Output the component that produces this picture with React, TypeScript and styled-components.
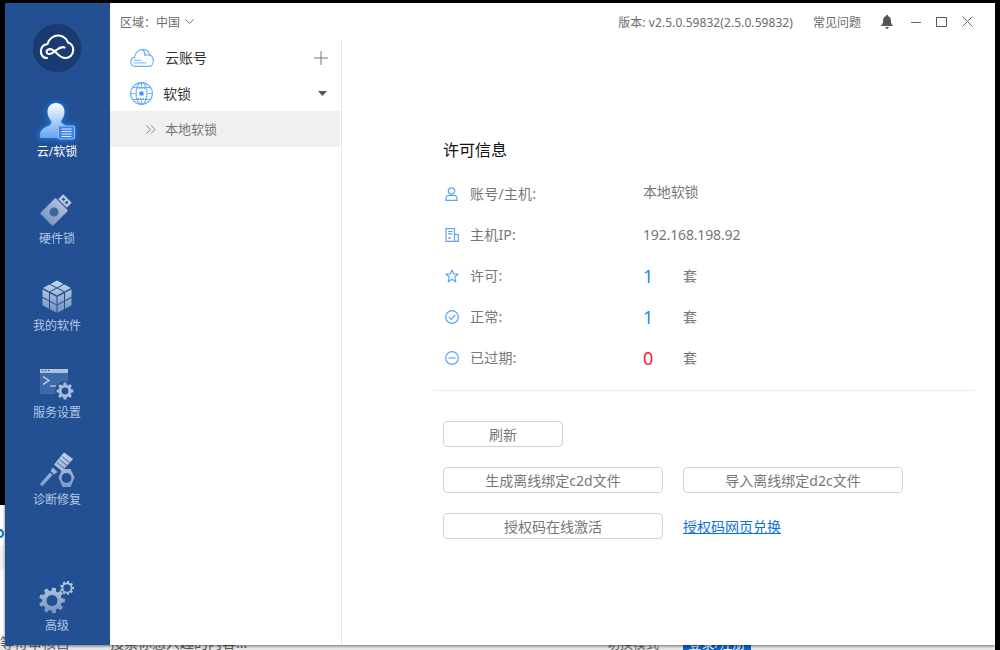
import React from "react";
import styled, { createGlobalStyle } from "styled-components";

const Global = createGlobalStyle`
  html, body { margin: 0; padding: 0; background: #000; }
  body { font-family: "Noto Sans", "Noto Sans CJK SC", sans-serif; }
  * { box-sizing: border-box; }
`;

const Desktop = styled.div`
  position: relative;
  width: 1000px;
  height: 650px;
  overflow: hidden;
  background: #000;
`;

const BackPage = styled.div`
  position: absolute;
  left: 0;
  top: 505px;
  width: 995px;
  height: 145px;
  background: linear-gradient(#fff 0 40px, #f3f3f3 40px 65px, #fff 65px 135px, #e9e9e9 135px);
  overflow: hidden;
`;

const BackRing = styled.span`
  position: absolute;
  left: -4px;
  top: 24px;
  width: 8px;
  height: 9px;
  border: 2px solid #1272c9;
  border-radius: 50%;
`;

const BackRow = styled.div`
  position: absolute;
  left: 0;
  right: 0;
  bottom: -3px;
  height: 20px;
  display: flex;
  align-items: center;
  font-size: 14px;
  line-height: 20px;
  color: #666;
  white-space: nowrap;
`;

const BackTab = styled.span`
  width: 93px;
`;

const BackInput = styled.span`
  width: 502px;
  padding-left: 17px;
  color: #555;
`;

const BackMode = styled.span`
  width: 88px;
  padding-left: 12px;
  font-size: 13px;
`;

const BackLogin = styled.span`
  width: 68px;
  height: 20px;
  background: #0b63d1;
  color: #fff;
  text-align: center;
  font-size: 13px;
`;

const AppWindow = styled.div`
  position: absolute;
  left: 5px;
  top: 3px;
  width: 990px;
  height: 642px;
  display: flex;
  background: #fff;
  box-shadow: 0 1px 3px rgba(0, 0, 0, 0.55);
`;

const Sidebar = styled.nav`
  width: 105px;
  flex: none;
  display: flex;
  flex-direction: column;
  align-items: center;
  padding: 21px 1px 10px 0;
  background: #235093;
`;

const LogoBox = styled.div`
  width: 48px;
  height: 48px;
  margin-bottom: 28px;
`;

const NavItem = styled.div<{ $bottom?: boolean }>`
  width: 100%;
  height: ${(p) => (p.$bottom ? "auto" : "87px")};
  margin-top: ${(p) => (p.$bottom ? "auto" : "0")};
  display: flex;
  flex-direction: column;
  align-items: center;
`;

const NavIcon = styled.div`
  height: 40px;
  display: flex;
  align-items: flex-end;
  justify-content: center;
`;

const NavLabel = styled.div<{ $active?: boolean }>`
  margin-top: 3px;
  font-size: 12px;
  line-height: 18px;
  color: ${(p) => (p.$active ? "#fff" : "#b4c7e6")};
`;

const Main = styled.div`
  flex: 1;
  min-width: 0;
  display: flex;
  flex-direction: column;
`;

const TopBar = styled.header`
  height: 37px;
  flex: none;
  display: flex;
  align-items: center;
  padding: 0 22px 0 10px;
  font-size: 12px;
  color: #6b6b6b;
`;

const Region = styled.div`
  display: flex;
  align-items: center;
  gap: 5px;
  margin-right: auto;
`;

const Version = styled.span`
  margin-right: 20px;
  letter-spacing: 0.07px;
`;

const Help = styled.span`
  margin-right: 19px;
`;

const WindowButtons = styled.div`
  display: flex;
  align-items: center;
  gap: 15px;
  margin-left: 17px;
`;

const Body = styled.div`
  flex: 1;
  min-height: 0;
  display: flex;
`;

const TreePanel = styled.aside`
  width: 232px;
  flex: none;
  border-right: 1px solid #e8e8e8;
`;

const TreeRow = styled.div<{ $gap: number; $height: number }>`
  height: ${(p) => p.$height}px;
  display: flex;
  align-items: center;
  gap: ${(p) => p.$gap}px;
  padding: 0 13px 0 20px;
  font-size: 14px;
  color: #333;
`;

const TreeLabel = styled.span`
  padding-bottom: 2px;
`;

const TreeEnd = styled.span<{ $inset?: number }>`
  margin-left: auto;
  margin-right: ${(p) => p.$inset ?? 0}px;
  display: flex;
`;

const SubRow = styled.div`
  height: 36px;
  width: 230px;
  display: flex;
  align-items: center;
  gap: 9px;
  padding-left: 36px;
  background: #f0f0f0;
  font-size: 13px;
  color: #777;
`;

const Detail = styled.section`
  flex: 1;
  min-width: 0;
  padding: 98px 0 0 101px;
`;

const Title = styled.h2`
  margin: 0 0 11px;
  font-size: 16px;
  font-weight: 400;
  line-height: 24px;
  color: #111;
`;

const InfoRow = styled.div`
  height: 41px;
  display: grid;
  grid-template-columns: 27px 173px 40px auto;
  align-items: center;
  font-size: 14px;
  color: #777;
`;

const InfoIcon = styled.span`
  display: flex;
  padding-left: 2px;
`;

const InfoText = styled.span`
  padding-bottom: 2px;
  letter-spacing: 0.2px;
`;

const Value = styled.span<{ $raised?: boolean }>`
  font-size: 14px;
  color: #777;
  letter-spacing: -0.15px;
  margin-bottom: ${(p) => (p.$raised ? "6px" : "0")};
  white-space: nowrap;
`;

const Count = styled.span<{ $color: string }>`
  font-size: 18px;
  line-height: 24px;
  color: ${(p) => p.$color};
`;

const Divider = styled.hr`
  width: 542px;
  height: 1px;
  margin: 12px 0 30px -10px;
  border: 0;
  background: #ececec;
`;

const ButtonRow = styled.div`
  display: flex;
  align-items: center;
  gap: 20px;
  margin-bottom: 20px;
`;

const ActionButton = styled.button<{ $wide?: boolean }>`
  width: ${(p) => (p.$wide ? "220px" : "120px")};
  height: 26px;
  padding: 0 0 1px;
  background: #fff;
  border: 1px solid #d2d2d2;
  border-radius: 4px;
  font: 14px "Noto Sans", "Noto Sans CJK SC", sans-serif;
  color: #777;
`;

const PageLink = styled.a`
  font-size: 14px;
  color: #0f6fdc;
  text-decoration: underline;
`;

const range = (n: number) => Array.from({ length: n }, (_, i) => i);

function gearPath(cx: number, cy: number, r: number, teeth: number, hole: number) {
  const pts: string[] = [];
  const inner = r * 0.76;
  const step = (Math.PI * 2) / teeth;
  range(teeth).forEach((i) => {
    const a = i * step;
    [
      [inner, a - step * 0.34],
      [r, a - step * 0.2],
      [r, a + step * 0.2],
      [inner, a + step * 0.34],
    ].forEach(([rad, t]) => {
      pts.push(`${(cx + rad * Math.cos(t)).toFixed(2)} ${(cy + rad * Math.sin(t)).toFixed(2)}`);
    });
  });
  return `M${pts.join("L")}Z M${cx - hole} ${cy}a${hole} ${hole} 0 1 0 ${hole * 2} 0a${hole} ${hole} 0 1 0 ${-hole * 2} 0Z`;
}

function Fade({ id, from = "#c4d2e8", to = "#6a8aba", h = 36 }: { id: string; from?: string; to?: string; h?: number }) {
  return (
    <defs>
      <linearGradient id={id} gradientUnits="userSpaceOnUse" x1="0" y1="0" x2="0" y2={h}>
        <stop offset="0" stopColor={from} />
        <stop offset="1" stopColor={to} />
      </linearGradient>
    </defs>
  );
}

const LogoIcon = () => (
  <svg width="48" height="48" viewBox="0 0 48 48">
    <path d="M24 0C33 0 37 3 41 7C45 11 48 15 48 24C48 33 45 37 41 41C37 45 33 48 24 48C15 48 11 45 7 41C3 37 0 33 0 24C0 15 3 11 7 7C11 3 15 0 24 0Z" fill="#1a3b72" />
    <path
      d="M14 34C8.500 34 7.500 28.500 8 26C8.500 22.500 11.500 20.500 14.500 20C16 14.500 21 11 26 11.500C30 12 33.500 14.500 35 18.500C38.500 19.500 40.500 23 40.200 26.500C39.800 31 36.500 34 32.500 34C28 34 25.500 31 23 28.500C20.500 26 17.500 24.500 15.300 25.500C13 26.500 13 29.500 15.500 30C18.500 30.500 21 28 23.500 26C26 24 29 22.500 31.500 23.500"
      fill="none"
      stroke="#fff"
      strokeWidth="2.1"
      strokeLinecap="round"
      strokeLinejoin="round"
    />
  </svg>
);

const UserIcon = () => (
  <svg width="36" height="38" viewBox="0 0 36 38" style={{ filter: "drop-shadow(0 0 3px #1a8cff)", overflow: "visible" }}>
    <Fade id="user" from="#ffffff" to="#5f9df0" h={38} />
    <path d="M17 1C22.500 1 25.500 5 25.500 10C25.500 14 23.500 17 22 19C22 21 23.500 22 26 23L26 26L24 27L24 36L1 36C0 30 3 26.500 8 24.500C11 23.500 12.500 22 12.500 19.500C10.500 17 8.500 14 8.500 10C8.500 5 11.500 1 17 1Z" fill="url(#user)" />
    <rect x="19.500" y="24" width="16" height="13" rx="1" fill="#3f86e6" stroke="#8cc0ff" strokeWidth="1" />
    <path d="M22.500 27h10M22.500 29.500h10M22.500 32h10M22.500 34.500h10" stroke="#dcecff" strokeWidth="1" />
  </svg>
);

const UsbIcon = () => (
  <svg width="36" height="36" viewBox="0 0 36 36" style={{ overflow: "visible" }}>
    <Fade id="usb" from="#c4d1e6" to="#7390bd" />
    <g transform="rotate(45 15 21)" fill="url(#usb)">
      <rect x="6" y="10" width="18" height="22" rx="1" />
      <path d="M9 2h12v7H9Z M11.500 4v2.500h2.500V4Z M16 4v2.500h2.500V4Z" fillRule="evenodd" />
      <circle cx="15" cy="21" r="4.500" fill="#3b659f" />
    </g>
  </svg>
);

const CubeIcon = () => {
  type V = [number, number];
  const quad = (o: V, u: V, v: V, i: number, j: number) => {
    const g = 0.07;
    const p = (a: number, b: number) => `${(o[0] + (i + a) * u[0] + (j + b) * v[0]).toFixed(2)},${(o[1] + (i + a) * u[1] + (j + b) * v[1]).toFixed(2)}`;
    return [p(g, g), p(1 - g, g), p(1 - g, 1 - g), p(g, 1 - g)].join(" ");
  };
  const faces: [V, V, V][] = [
    [[16, 0], [7.5, 4], [-7.5, 4]],
    [[1, 8.5], [7.5, 4], [0, 8.5]],
    [[16, 16.5], [7.5, -4], [0, 8.5]],
  ];
  return (
    <svg width="32" height="34" viewBox="0 0 32 34">
      <Fade id="cube" from="#ccd9ec" to="#6c8cbb" h={34} />
      {faces.flatMap(([o, u, v], f) =>
        [0, 1].flatMap((i) => [0, 1].map((j) => <polygon key={`${f}${i}${j}`} points={quad(o, u, v, i, j)} fill="url(#cube)" />))
      )}
    </svg>
  );
};

const TerminalIcon = () => (
  <svg width="36" height="33" viewBox="0 0 36 33">
    <Fade id="term" from="#bccbe3" to="#7c97c2" h={33} />
    <path d="M1 1h28v25H1Z" fill="url(#term)" opacity="0.95" />
    <path d="M1 5h28v21H1Z" fill="#3f6aa8" />
    <path d="M4 8.500l6 4-6 4M11 18h6" fill="none" stroke="#d5e0f0" strokeWidth="1.200" />
    <path d="M3 2.500h1.500M6 2.500h1.500M9 2.500h1.500" stroke="#2d5796" strokeWidth="1.200" />
    <circle cx="26" cy="23" r="10" fill="#235093" />
    <path d={gearPath(26, 23, 8.5, 8, 3.4)} fill="#a9bcdb" fillRule="evenodd" />
  </svg>
);

const RepairIcon = () => (
  <svg width="36" height="36" viewBox="0 0 36 36">
    <Fade id="rep" from="#c3d2e9" to="#7c9ac8" />
    <g fill="url(#rep)">
      <path d="M25 0.500L34 7L23 19.500L15 12.500Z" />
      <path d="M14 15.500L18.500 20L15 22.500L11.500 19Z" />
      <path d="M11 20.500L13.500 23L4 33.500C2.800 34.800 0.500 32.500 1.500 31.300Z" />
      <path d="M23.500 17L31.500 17L35.500 25.500L31.500 35L23.500 35L19.500 25.500Z M22.500 26a5 5 0 1 0 10 0a5 5 0 1 0 -10 0Z" fillRule="evenodd" />
    </g>
    <path d="M23 4.500L31 11M20.500 7.500L28.500 14M18 10.500L26 17" stroke="#3f6aa8" strokeWidth="1" />
  </svg>
);

const GearsIcon = () => (
  <svg width="36" height="33" viewBox="0 0 36 33">
    <Fade id="gear" from="#c1cfe6" to="#7390bd" h={33} />
    <path d={gearPath(13, 19.5, 13, 9, 5.5)} fill="url(#gear)" fillRule="evenodd" />
    <path d={gearPath(28, 7, 7, 9, 3.7)} fill="url(#gear)" fillRule="evenodd" />
  </svg>
);

const CloudIcon = () => (
  <svg width="24" height="20" viewBox="0 0 25 20" fill="none" stroke="#69aefc" strokeWidth="1.200">
    <path d="M6 18.800C2.500 18.800 0.800 16.500 0.800 14C0.800 11.500 2.500 9.800 4.800 9.300C5 5 8.500 1 13 1C17 1 20 3.500 20.800 7C23 8 24.300 10.500 24.300 13.500C24.300 16.500 22 18.800 19 18.800Z" />
    <path d="M13 1C15 3 16 4.500 15.500 7C17.500 6.500 19.500 6.500 20.800 7" />
    <path d="M4 12.500h8M4 15h13" stroke="#8cc3ff" />
  </svg>
);

const GlobeIcon = () => (
  <svg width="23" height="23" viewBox="0 0 23 23" fill="none" stroke="#69aefc" strokeWidth="1.100">
    <circle cx="11.500" cy="11.500" r="10.900" />
    <ellipse cx="11.500" cy="11.500" rx="5.500" ry="10.900" />
    <path d="M2.500 5.500h18M2.500 17.500h18M0.600 11.500h4M18.400 11.500h4M11.500 0.600v4M11.500 18.400v4" />
    <rect x="6.500" y="6.500" width="10" height="10" fill="#fff" strokeDasharray="1.500 1" />
    <rect x="9.500" y="9.500" width="4" height="4" fill="#3d97fb" stroke="none" />
  </svg>
);

const Plus = () => (
  <svg width="14" height="14" viewBox="0 0 14 14" stroke="#777" strokeWidth="1">
    <path d="M7 0v14M0 7h14" />
  </svg>
);

const Caret = () => (
  <svg width="9" height="5" viewBox="0 0 9 5">
    <path d="M0 0h9L4.500 5Z" fill="#555" />
  </svg>
);

const DoubleChevron = () => (
  <svg width="10" height="9" viewBox="0 0 10 9" fill="none" stroke="#888" strokeWidth="1">
    <path d="M0.500 0.500L4.500 4.500L0.500 8.500M5 0.500L9 4.500L5 8.500" />
  </svg>
);

const ChevronDown = () => (
  <svg width="9" height="5" viewBox="0 0 9 5" fill="none" stroke="#777" strokeWidth="1">
    <path d="M0.300 0.300L4.500 4.500L8.700 0.300" />
  </svg>
);

const Bell = () => (
  <svg width="14" height="14" viewBox="0 0 14 14" fill="#555">
    <path d="M7 0C7.800 0 8.200 0.500 8.200 1.200C10.500 2 11 4 11 6.500C11 8.500 12 10 13.500 11H0.500C2 10 3 8.500 3 6.500C3 4 3.500 2 5.800 1.200C5.800 0.500 6.200 0 7 0Z" />
    <path d="M5.300 12H8.700C8.500 13.200 7.800 14 7 14C6.200 14 5.500 13.200 5.300 12Z" />
  </svg>
);

const WinMin = () => (
  <svg width="10" height="10" viewBox="0 0 10 10" stroke="#666"><path d="M0 5.500h10" /></svg>
);
const WinMax = () => (
  <svg width="11" height="10" viewBox="0 0 11 10" fill="none" stroke="#555"><path d="M0.500 0.500h10v9h-10Z" /></svg>
);
const WinClose = () => (
  <svg width="11" height="11" viewBox="0 0 11 11" stroke="#666"><path d="M0.500 0.500L10.500 10.500M10.500 0.500L0.500 10.500" /></svg>
);

const infoStroke = { fill: "none", stroke: "#5aa5fa", strokeWidth: 1.2 };

const IconUser = () => (
  <svg width="13" height="14" viewBox="0 0 13 14" {...infoStroke}>
    <circle cx="6.500" cy="4" r="3.200" />
    <path d="M1 13.300V11.500C1 9.500 2.500 8.300 4 8.300H9C10.500 8.300 12 9.500 12 11.500V13.300Z" />
  </svg>
);
const IconHost = () => (
  <svg width="14" height="14" viewBox="0 0 14 14" {...infoStroke}>
    <path d="M9.500 13.300H1V0.700H9.500V13.300H13.300V6.500H9.500" />
    <path d="M3 3.500h4.500M3 5.800h4.500" />
    <rect x="3.500" y="9" width="2" height="2" fill="#5aa5fa" stroke="none" />
  </svg>
);
const IconStar = () => (
  <svg width="14" height="14" viewBox="0 0 14 14" {...infoStroke}>
    <path d="M7 1L8.800 5H13.200L9.800 8L10.800 12.800L7 10.300L3.200 12.800L4.200 8L0.800 5H5.200Z" strokeLinejoin="round" />
  </svg>
);
const IconCheck = () => (
  <svg width="14" height="14" viewBox="0 0 14 14" {...infoStroke}>
    <circle cx="7" cy="7" r="6.300" />
    <path d="M4 7L6.300 9.300L10.300 5" />
  </svg>
);
const IconMinus = () => (
  <svg width="14" height="14" viewBox="0 0 14 14" {...infoStroke}>
    <circle cx="7" cy="7" r="6.300" />
    <path d="M3.500 7h7" />
  </svg>
);

const nav = [
  { label: "硬件锁", icon: <UsbIcon /> },
  { label: "我的软件", icon: <CubeIcon /> },
  { label: "服务设置", icon: <TerminalIcon /> },
  { label: "诊断修复", icon: <RepairIcon /> },
];

const info = [
  { icon: <IconStar />, label: "许可:", count: "1", color: "#1f87ee" },
  { icon: <IconCheck />, label: "正常:", count: "1", color: "#1f87ee" },
  { icon: <IconMinus />, label: "已过期:", count: "0", color: "#f5222d" },
];

export default function App() {
  return (
    <Desktop>
      <Global />
      <BackPage>
        <BackRing />
        <BackRow>
          <BackTab>等待审核目</BackTab>
          <BackInput>搜索你感兴趣的内容...</BackInput>
          <BackMode>切换模式</BackMode>
          <BackLogin>登录/注册</BackLogin>
        </BackRow>
      </BackPage>
      <AppWindow>
        <Sidebar>
          <LogoBox>
            <LogoIcon />
          </LogoBox>
          <NavItem>
            <NavIcon>
              <UserIcon />
            </NavIcon>
            <NavLabel $active>云/软锁</NavLabel>
          </NavItem>
          {nav.map((n) => (
            <NavItem key={n.label}>
              <NavIcon>{n.icon}</NavIcon>
              <NavLabel>{n.label}</NavLabel>
            </NavItem>
          ))}
          <NavItem $bottom>
            <NavIcon>
              <GearsIcon />
            </NavIcon>
            <NavLabel>高级</NavLabel>
          </NavItem>
        </Sidebar>
        <Main>
          <TopBar>
            <Region>
              <span>区域：中国</span>
              <ChevronDown />
            </Region>
            <Version>版本: v2.5.0.59832(2.5.0.59832)</Version>
            <Help>常见问题</Help>
            <Bell />
            <WindowButtons>
              <WinMin />
              <WinMax />
              <WinClose />
            </WindowButtons>
          </TopBar>
          <Body>
            <TreePanel>
              <TreeRow $gap={11} $height={36}>
                <CloudIcon />
                <TreeLabel>云账号</TreeLabel>
                <TreeEnd>
                  <Plus />
                </TreeEnd>
              </TreeRow>
              <TreeRow $gap={10} $height={35}>
                <GlobeIcon />
                <TreeLabel>软锁</TreeLabel>
                <TreeEnd $inset={1}>
                  <Caret />
                </TreeEnd>
              </TreeRow>
              <SubRow>
                <DoubleChevron />
                <TreeLabel>本地软锁</TreeLabel>
              </SubRow>
            </TreePanel>
            <Detail>
              <Title>许可信息</Title>
              <InfoRow>
                <InfoIcon>
                  <IconUser />
                </InfoIcon>
                <InfoText>账号/主机:</InfoText>
                <Value $raised>本地软锁</Value>
              </InfoRow>
              <InfoRow>
                <InfoIcon>
                  <IconHost />
                </InfoIcon>
                <InfoText>主机IP:</InfoText>
                <Value>192.168.198.92</Value>
              </InfoRow>
              {info.map((r) => (
                <InfoRow key={r.label}>
                  <InfoIcon>{r.icon}</InfoIcon>
                  <InfoText>{r.label}</InfoText>
                  <Count $color={r.color}>{r.count}</Count>
                  <InfoText>套</InfoText>
                </InfoRow>
              ))}
              <Divider />
              <ButtonRow>
                <ActionButton>刷新</ActionButton>
              </ButtonRow>
              <ButtonRow>
                <ActionButton $wide>生成离线绑定c2d文件</ActionButton>
                <ActionButton $wide>导入离线绑定d2c文件</ActionButton>
              </ButtonRow>
              <ButtonRow>
                <ActionButton $wide>授权码在线激活</ActionButton>
                <PageLink href="#">授权码网页兑换</PageLink>
              </ButtonRow>
            </Detail>
          </Body>
        </Main>
      </AppWindow>
    </Desktop>
  );
}
